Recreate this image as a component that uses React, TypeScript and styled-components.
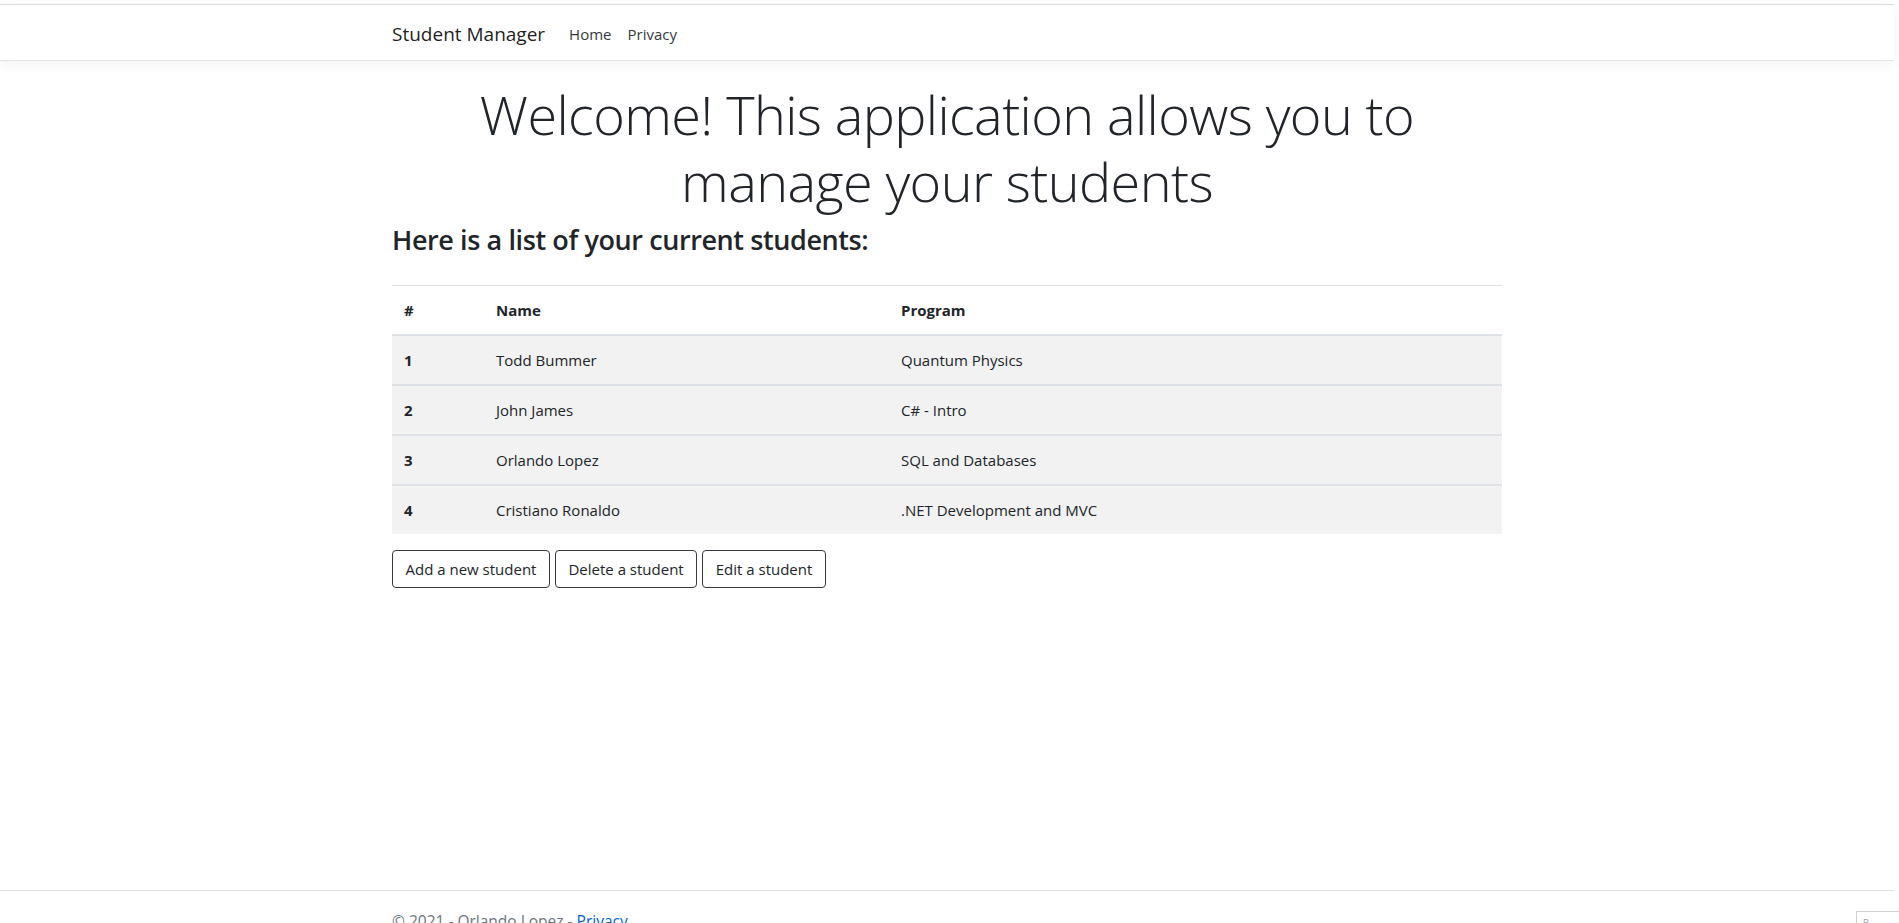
import React from 'react';
import styled, { createGlobalStyle } from 'styled-components';

const GlobalStyle = createGlobalStyle`
  html, body {
    margin: 0;
    padding: 0;
    overflow: hidden;
  }
  body {
    font-family: "Segoe UI", "Open Sans", "Noto Sans", sans-serif;
    font-size: 16px;
    line-height: 1.5;
    color: #212529;
    background: #fff;
  }
  *, *::before, *::after { box-sizing: border-box; }
`;

const Page = styled.div`
  height: 951px;
  display: flex;
  flex-direction: column;
  padding-top: 4px;
  padding-right: 5px;
`;

const Header = styled.header`
  flex-shrink: 0;
  border-top: 1px solid #dadce0;
  border-bottom: 1px solid #e5e5e5;
  background: #fff;
  box-shadow: 0 4px 12px rgba(0, 0, 0, 0.05);
  position: relative;
  z-index: 1;
`;

const Container = styled.div`
  width: 1110px;
  margin: 0 auto;
`;

const NavBar = styled(Container)`
  height: 55px;
  display: flex;
  align-items: center;
  padding-top: 2px;
`;

const Brand = styled.a`
  font-size: 19px;
  line-height: 30px;
  color: rgba(0, 0, 0, 0.9);
  text-decoration: none;
  margin-right: 16px;
`;

const NavLink = styled.a`
  padding: 0 8px;
  font-size: 15px;
  line-height: 24px;
  color: #343a40;
  text-decoration: none;
`;

const Main = styled(Container)`
  flex: 1;
  padding-top: 20px;
`;

const Display = styled.h1`
  margin: 0 0 8px;
  text-align: center;
  font-size: 54px;
  letter-spacing: -0.6px;
  font-weight: 300;
  line-height: 67px;
  color: #212529;
`;

const SubHeading = styled.h3`
  margin: -1px 0 28px;
  font-size: 27px;
  font-weight: 600;
  letter-spacing: -0.4px;
  line-height: 35px;
`;

const Table = styled.table`
  width: 100%;
  border-collapse: collapse;
  margin-bottom: 16px;
`;

const HeadCell = styled.th<{ $w?: number }>`
  padding: 12px;
  text-align: left;
  vertical-align: bottom;
  font-weight: 700;
  font-size: 15px;
  line-height: 24px;
  border-top: 1px solid #dee2e6;
  border-bottom: 2px solid #dee2e6;
  width: ${(p) => (p.$w ? `${p.$w}px` : 'auto')};
`;

const Row = styled.tr`
  background: #f2f2f2;
`;

const Cell = styled.td<{ $bold?: boolean }>`
  padding: 12px;
  font-size: 15px;
  line-height: 24px;
  border-top: 2px solid #dee2e6;
  font-weight: ${(p) => (p.$bold ? 700 : 400)};
`;

const Actions = styled.div`
  display: flex;
  gap: 5px;
`;

const Button = styled.button`
  font-family: inherit;
  font-size: 15px;
  line-height: 24px;
  padding: 6px 12.5px;
  border: 1px solid #343a40;
  border-radius: 4px;
  background: transparent;
  color: #212529;
  cursor: pointer;
`;

const Footer = styled.footer`
  flex-shrink: 0;
  height: 61px;
  border-top: 1px solid #dee2e6;
  color: #6c757d;
  font-size: 15.5px;
  line-height: 60px;
  white-space: nowrap;
  overflow: hidden;
`;

const FooterLink = styled.a`
  color: #0366d6;
  text-decoration: none;
`;

const Widget = styled.div`
  position: fixed;
  left: 1856px;
  top: 911px;
  width: 60px;
  height: 30px;
  border: 1px solid #cfcfcf;
  background: #fff;
  font-size: 9px;
  color: #9a9a9a;
  padding: 6px 0 0 6px;
  line-height: 1;
`;

const students = [
  { id: 1, name: 'Todd Bummer', program: 'Quantum Physics' },
  { id: 2, name: 'John James', program: 'C# - Intro' },
  { id: 3, name: 'Orlando Lopez', program: 'SQL and Databases' },
  { id: 4, name: 'Cristiano Ronaldo', program: '.NET Development and MVC' },
];

export default function App() {
  return (
    <>
      <GlobalStyle />
      <Page>
        <Header>
          <NavBar as="nav">
            <Brand href="#">Student Manager</Brand>
            <NavLink href="#">Home</NavLink>
            <NavLink href="#">Privacy</NavLink>
          </NavBar>
        </Header>
        <Main as="main">
          <Display>Welcome! This application allows you to manage your students</Display>
          <SubHeading>Here is a list of your current students:</SubHeading>
          <Table>
            <thead>
              <tr>
                <HeadCell $w={92}>#</HeadCell>
                <HeadCell $w={405}>Name</HeadCell>
                <HeadCell>Program</HeadCell>
              </tr>
            </thead>
            <tbody>
              {students.map((s) => (
                <Row key={s.id}>
                  <Cell $bold>{s.id}</Cell>
                  <Cell>{s.name}</Cell>
                  <Cell>{s.program}</Cell>
                </Row>
              ))}
            </tbody>
          </Table>
          <Actions>
            <Button>Add a new student</Button>
            <Button>Delete a student</Button>
            <Button>Edit a student</Button>
          </Actions>
        </Main>
        <Footer>
          <Container>
            © 2021 - Orlando Lopez - <FooterLink href="#">Privacy</FooterLink>
          </Container>
        </Footer>
      </Page>
      <Widget>B</Widget>
    </>
  );
}
